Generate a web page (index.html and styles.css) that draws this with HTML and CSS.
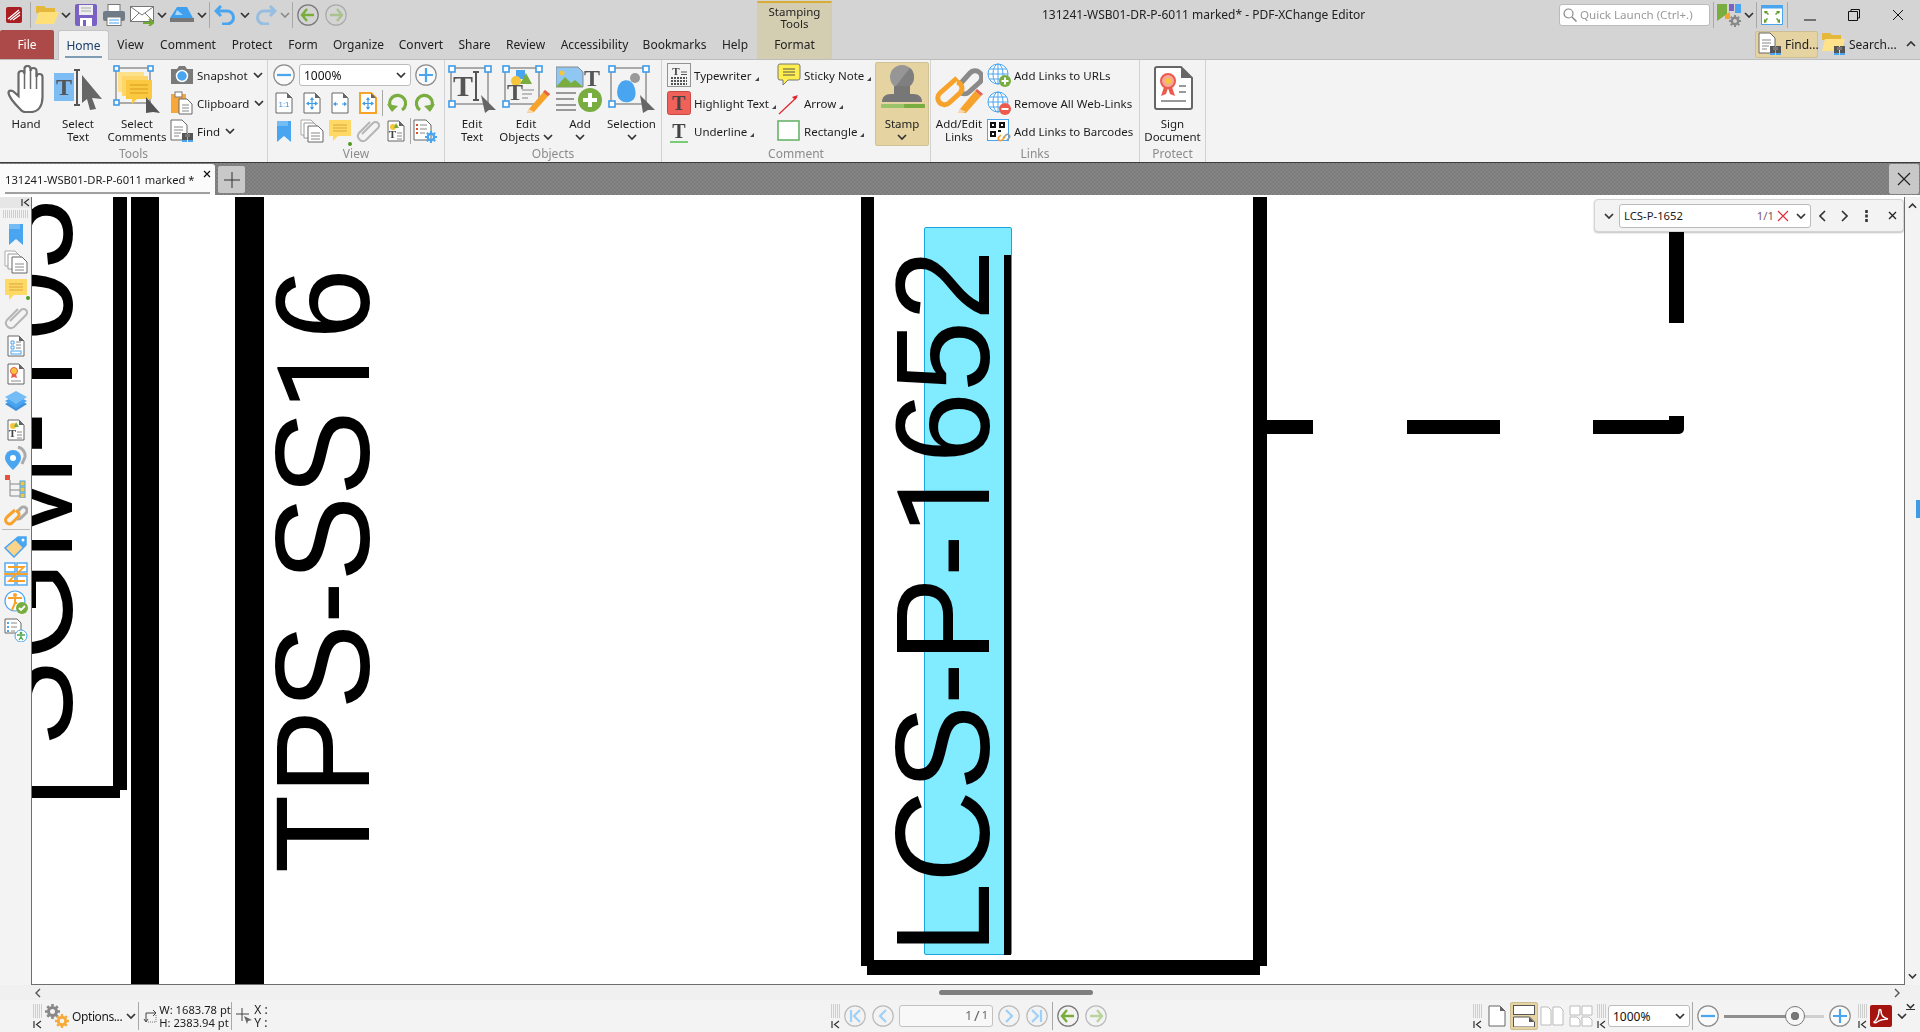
FILE: index.html
```html
<!DOCTYPE html>
<html>
<head>
  <meta charset="UTF-8">
  <title>131241-WSB01-DR-P-6011 marked* - PDF-XChange Editor</title>
  <link rel="stylesheet" href="styles.css">
</head>
<body>
<svg class="defs">
  <symbol id="dd" viewBox="0 0 10 6"><path d="M1 1l4 4 4-4" fill="none" stroke="#333" stroke-width="1.7"/></symbol>
  <symbol id="ddup" viewBox="0 0 10 6"><path d="M1 5l4-4 4 4" fill="none" stroke="#333" stroke-width="1.7"/></symbol>
  <symbol id="collapse" viewBox="0 0 9 9"><path d="M1 1v7M8 1L3.500 4.500 8 8" fill="none" stroke="#333" stroke-width="1.200"/></symbol>
  <symbol id="grip" viewBox="0 0 9 15"><path d="M0 1h9M0 3h9M0 5h9M0 7h9M0 9h9M0 11h9M0 13h9" stroke="#aaa" stroke-dasharray="1 1"/></symbol>
  <symbol id="logo" viewBox="0 0 16 16"><rect width="16" height="16" rx="2" fill="#a81e22"/><path d="M2 12L13 3M4 13L14 5M7 13l7-5" stroke="#fff" stroke-width="1.300"/></symbol>
  <symbol id="folder" viewBox="0 0 24 20"><path d="M1 1h8l2 2h9v5H1z" fill="#e5b83b"/><path d="M0 19L4 7h20l-5 12z" fill="#ffdf78"/></symbol>
  <symbol id="save" viewBox="0 0 22 22"><rect width="22" height="22" rx="2" fill="#7a62c4"/><rect x="4" y="1" width="14" height="10" fill="#eee"/><path d="M6 4h10M6 7h10" stroke="#aaa"/><rect x="5" y="14" width="12" height="8" fill="#fff"/><rect x="8" y="16" width="3" height="6" fill="#7a62c4"/></symbol>
  <symbol id="print" viewBox="0 0 22 22"><rect x="5" y="0.500" width="12" height="8" fill="#fff" stroke="#777"/><rect y="7" width="22" height="10" rx="2" fill="#6f7c88"/><rect x="4" y="13" width="14" height="8.500" fill="#fff" stroke="#777"/><path d="M6 16h10M6 19h10" stroke="#4aa5f0"/></symbol>
  <symbol id="mail" viewBox="0 0 26 22"><rect x="0.500" y="2.500" width="23" height="15" fill="#fff" stroke="#777"/><path d="M1 3l11 8 11-8M1 17l8-8M23 17l-8-8" fill="none" stroke="#777"/><path d="M13 19h10M19 15l4 4-4 3" fill="none" stroke="#6fa832" stroke-width="2"/></symbol>
  <symbol id="tray" viewBox="0 0 24 16"><path d="M7 0h10l6 11H0z" fill="#3fa0ef"/><path d="M7 3l-2 5h8z" fill="#a9d8fb"/><rect y="11" width="24" height="4" fill="#777"/></symbol>
  <symbol id="undo" viewBox="0 0 22 20"><path d="M7 1L2 6l5 5M2 6h11a6 6 0 0 1 0 13H8" fill="none" stroke="#4aa5f0" stroke-width="3"/></symbol>
  <symbol id="back" viewBox="0 0 22 22"><circle cx="11" cy="11" r="10.200" fill="none" stroke="#777" stroke-width="1.200"/><path d="M10 5l-5 6 5 6M5 11h12" fill="none" stroke="#78ad3c" stroke-width="2.400"/></symbol>
  <symbol id="c-minus" viewBox="0 0 22 22"><circle cx="11" cy="11" r="10.200" fill="#fafafa" stroke="#8c8c8c" stroke-width="1.200"/><path d="M4 11h14" stroke="#4aa5f0" stroke-width="2.200"/></symbol>
  <symbol id="c-plus" viewBox="0 0 22 22"><circle cx="11" cy="11" r="10.200" fill="#fafafa" stroke="#8c8c8c" stroke-width="1.200"/><path d="M4 11h14M11 4v14" stroke="#4aa5f0" stroke-width="2.200"/></symbol>
  <symbol id="c-first" viewBox="0 0 22 22"><circle cx="11" cy="11" r="10.200" fill="none" stroke="#bbb" stroke-width="1.200"/><path d="M7 5v12M16 5l-6 6 6 6" fill="none" stroke="#9fd0f8" stroke-width="2.200"/></symbol>
  <symbol id="c-prev" viewBox="0 0 22 22"><circle cx="11" cy="11" r="10.200" fill="none" stroke="#bbb" stroke-width="1.200"/><path d="M14 5l-6 6 6 6" fill="none" stroke="#9fd0f8" stroke-width="2.200"/></symbol>
  <symbol id="hand" viewBox="0 0 38 48"><path d="M13 44C9 40 2 32 1.500 28c0-3 3.500-3 5.500-1l4.500 4V9a3 3 0 0 1 6 0V4a3 3 0 0 1 6 0v2a3 3 0 0 1 6 0v6a3 3 0 0 1 6 0v20c0 8-3.500 15-11.500 15H18c-2 0-3.500-1-5-3z" fill="#fff" stroke="#6a6a6a" stroke-width="2.200"/><path d="M17.500 9v15M23.500 5v19M29.500 7v17" stroke="#6a6a6a" stroke-width="1.500"/></symbol>
  <symbol id="sel-comments" viewBox="0 0 48 48"><rect x="3" y="3" width="34" height="35" fill="none" stroke="#aaa" stroke-width="2"/><rect x="5" y="7" width="26" height="20" fill="#fde08a"/><rect x="9" y="11" width="26" height="20" fill="#fdd568"/><path d="M13 15h26v19H24l-5 5v-5h-6z" fill="#fbc93f"/><path d="M17 20h18M17 24h18M17 28h18" stroke="#d89a20"/><g fill="#fff" stroke="#3e9be8" stroke-width="1.600"><rect x="1" y="1" width="5" height="5"/><rect x="35" y="1" width="5" height="5"/><rect x="1" y="35" width="5" height="5"/></g><path d="M33 32l14 16-7-1-7 1z" fill="#555"/></symbol>
  <symbol id="snapshot" viewBox="0 0 24 24"><path d="M1 6h6l2-3h6l2 3h6v15H1z" fill="#7a7a7a"/><circle cx="12" cy="13" r="5.500" fill="#4aa5f0" stroke="#fff" stroke-width="1.500"/></symbol>
  <symbol id="clipboard" viewBox="0 0 24 24"><rect x="1" y="3" width="15" height="19" fill="#f7a73a"/><rect x="5" y="1" width="7" height="5" fill="#fff" stroke="#777"/><path d="M9 8h8l5 5v10H9z" fill="#fff" stroke="#666"/><path d="M12 14h7M12 17h7M12 20h7" stroke="#888"/></symbol>
  <symbol id="findico" viewBox="0 0 24 24"><path d="M1 1h11l5 5v15H1z" fill="#fff" stroke="#666"/><path d="M4 8h9M4 11h9M4 14h7M4 17h5" stroke="#888"/><rect x="12" y="14" width="5" height="9" fill="#555"/><rect x="18" y="14" width="5" height="9" fill="#555"/><rect x="15" y="15" width="5" height="3" fill="#777"/><rect x="12" y="21" width="5" height="2" fill="#4aa5f0"/><rect x="18" y="21" width="5" height="2" fill="#4aa5f0"/></symbol>
  <symbol id="page" viewBox="0 0 18 22"><path d="M1 1h11l5 5v15H1z" fill="#fff" stroke="#666"/><path d="M12 1v5h5z" fill="#666"/></symbol>
  <symbol id="p-fit" viewBox="0 0 18 22"><use href="#page"/><path d="M9 6v11M3.500 11.500h11M7.500 8L9 6l1.500 2M7.500 15L9 17l1.500-2M6 10l-2 1.500L6 13M12 10l2 1.500L12 13" fill="none" stroke="#3e9be8" stroke-width="1.200"/></symbol>
  <symbol id="p-width" viewBox="0 0 18 22"><use href="#page"/><path d="M3 12h4M11 12h4M5 10.500L3 12l2 1.500M13 10.500l2 1.500-2 1.500" fill="none" stroke="#3e9be8" stroke-width="1.200"/></symbol>
  <symbol id="p-visible" viewBox="0 0 18 22"><path d="M1 1h11l5 5v15H1z" fill="#fff" stroke="#f7a22a" stroke-width="2"/><path d="M12 1v5h5z" fill="#666"/><path d="M9 6v11M3.500 11.500h11M7.500 8L9 6l1.500 2M7.500 15L9 17l1.500-2M6 10l-2 1.500L6 13M12 10l2 1.500L12 13" fill="none" stroke="#3e9be8" stroke-width="1.200"/></symbol>
  <symbol id="rot-l" viewBox="0 0 22 22"><path d="M6 17a8 8 0 1 1 10 1" fill="none" stroke="#79ad3f" stroke-width="3.200"/><path d="M1 12l5 8 6-6z" fill="#79ad3f"/></symbol>
  <symbol id="rot-r" viewBox="0 0 22 22"><path d="M16 17A8 8 0 1 0 6 18" fill="none" stroke="#79ad3f" stroke-width="3.200"/><path d="M21 12l-5 8-6-6z" fill="#79ad3f"/></symbol>
  <symbol id="bookmark" viewBox="0 0 24 24"><path d="M5 2h14v21l-7-6-7 6z" fill="#4aa5f0"/><path d="M5 2h11v5H5z" fill="#74bcf6"/></symbol>
  <symbol id="pages" viewBox="0 0 24 24"><path d="M1 1h10l3 3v12H1z" fill="#fff" stroke="#aaa"/><path d="M4 4h10l3 3v12H4z" fill="#fff" stroke="#999"/><path d="M8 7h10l5 5v11H8z" fill="#fff" stroke="#666"/><path d="M11 14h9M11 17h9M11 20h9" stroke="#888"/></symbol>
  <symbol id="note" viewBox="0 0 24 24"><path d="M1 1h22v16H10l-5 5v-5H1z" fill="#ffd966"/><path d="M5 6h14M5 9h14M5 12h14" stroke="#d9a53a"/></symbol>
  <symbol id="clip" viewBox="0 0 24 24"><path d="M6 15L17 4a3.500 3.500 0 0 1 5 5L10 21a5 5 0 0 1-7-7L14 3" fill="none" stroke="#b5b5b5" stroke-width="2"/></symbol>
  <symbol id="gear" viewBox="0 0 12 12"><circle cx="6" cy="6" r="3.200" fill="none" stroke="currentColor" stroke-width="2.400"/><path d="M6 0v2M6 10v2M0 6h2M10 6h2M1.800 1.800l1.400 1.400M8.800 8.800l1.400 1.400M10.200 1.800L8.800 3.200M3.200 8.800l-1.400 1.400" stroke="currentColor" stroke-width="2"/></symbol>
  <symbol id="docgear" viewBox="0 0 24 24"><path d="M1 1h12l5 5v15H1z" fill="#fff" stroke="#666"/><path d="M3 6h2M3 10h2M3 14h2" stroke="#d8532b" stroke-width="2"/><path d="M7 6h7M7 10h7M7 14h5" stroke="#888"/><svg x="12" y="12" width="12" height="12" class="blue-gear"><use href="#gear"/></svg></symbol>
  <symbol id="sticky" viewBox="0 0 24 24"><path d="M3 1h18a2 2 0 0 1 2 2v12a2 2 0 0 1-2 2H11l-5 5v-5H3a2 2 0 0 1-2-2V3a2 2 0 0 1 2-2z" fill="#ffee4d" stroke="#777"/><path d="M6 6h12M6 9h12M6 12h12" stroke="#555"/></symbol>
  <symbol id="arrow" viewBox="0 0 24 24"><path d="M2 23L20 6" stroke="#e3252c" stroke-width="1.200"/><path d="M21 4l-6 2 3 3z" fill="#e3252c"/></symbol>
  <symbol id="rect" viewBox="0 0 24 24"><rect x="1" y="2" width="21" height="19" fill="#fff" stroke="#69b36a" stroke-width="1.600"/></symbol>
  <symbol id="selection" viewBox="0 0 48 48"><rect x="3" y="3" width="35" height="36" fill="none" stroke="#aaa" stroke-width="2"/><circle cx="27" cy="13" r="5" fill="#999"/><path d="M10 22c3-9 12-8 15-3s5 16-4 18-14-6-11-15z" fill="#4aa5f0"/><g fill="#fff" stroke="#3e9be8" stroke-width="1.600"><rect x="1" y="1" width="6" height="6"/><rect x="35" y="1" width="6" height="6"/><rect x="1" y="36" width="6" height="6"/></g><path d="M32 30l15 15-7 0-5 3z" fill="#666"/></symbol>
  <symbol id="stamp" viewBox="0 0 48 48"><circle cx="24" cy="13" r="12" fill="#969696"/><path d="M32 4a12 12 0 0 1 0 18L17 23z" fill="#7f7f7f"/><rect x="16" y="22" width="16" height="8" fill="#777"/><path d="M4 38c0-5 3-8 9-8h22c6 0 9 3 9 8z" fill="#777"/><rect x="3" y="40" width="44" height="4" rx="1" fill="#9ac46a"/><rect x="26" y="40" width="21" height="4" rx="1" fill="#79ad3f"/></symbol>
  <symbol id="chain-big" viewBox="0 0 48 48"><path d="M26 18l9-10a6.500 6.500 0 0 1 10 9L34 27a6.500 6.500 0 0 1-9 0" fill="none" stroke="#8a8a8a" stroke-width="5"/><path d="M22 13L5 28a6.500 6.500 0 0 0 9 10l11-10a6.500 6.500 0 0 0-3-11" fill="none" stroke="#f7a22a" stroke-width="5"/><path d="M25 44l15-18 6 5-15 17-8 1z" fill="#f7a22a"/><path d="M42 24l6 5-2 2-6-5z" fill="#e8604c"/><path d="M25 44l6 3-8 2z" fill="#f5d9b0"/></symbol>
  <symbol id="globe" viewBox="0 0 24 24"><circle cx="11" cy="11" r="10" fill="#fff" stroke="#4aa5f0"/><ellipse cx="11" cy="11" rx="5" ry="10" fill="none" stroke="#4aa5f0"/><path d="M11 1v20M1 11h20M2.500 6h17M2.500 16h17" stroke="#4aa5f0"/></symbol>
  <symbol id="globe-add" viewBox="0 0 24 24"><use href="#globe"/><circle cx="18" cy="18" r="6" fill="#79ad3f"/><path d="M18 14.500v7M14.500 18h7" stroke="#fff" stroke-width="2"/></symbol>
  <symbol id="globe-del" viewBox="0 0 24 24"><use href="#globe"/><circle cx="18" cy="18" r="6" fill="#ec5a4b"/><path d="M14.500 18h7" stroke="#fff" stroke-width="2"/></symbol>
  <symbol id="qr" viewBox="0 0 24 24"><rect x="0.500" y="0.500" width="21" height="21" fill="#fff" stroke="#4aa5f0"/><path d="M3 3h6v6H3zM5 5h2v2H5zM12 3h6v6h-6zM14 5h2v2h-2zM3 12h6v6H3zM5 14h2v2H5zM11 11h3v2h-3z" fill="#111" fill-rule="evenodd"/><path d="M16 19l3-3a2 2 0 0 1 3 3l-2 2" fill="none" stroke="#999" stroke-width="1.600"/><path d="M18 18l-3 3a2 2 0 0 1-3-3l2-2" fill="none" stroke="#f7a22a" stroke-width="1.600"/></symbol>
  <symbol id="sign" viewBox="0 0 48 48"><path d="M8 2h24l11 11v29a2 2 0 0 1-2 2H8a2 2 0 0 1-2-2V4a2 2 0 0 1 2-2z" fill="#fff" stroke="#666" stroke-width="2"/><path d="M32 2v11h11z" fill="#666"/><circle cx="19" cy="16" r="7" fill="#f4a79a" stroke="#ec5a4b" stroke-width="2"/><circle cx="19" cy="16" r="3" fill="#f7c53a"/><path d="M15 22l-3 9 5-2 2-6 2 6 5 2-3-9z" fill="#ec5a4b"/><path d="M30 21h7M30 27h7M12 36h25" stroke="#999" stroke-width="2"/></symbol>
  <symbol id="ql" viewBox="0 0 14 14"><circle cx="5.500" cy="5.500" r="4.500" fill="none" stroke="#888" stroke-width="1.200"/><path d="M9 9l4.500 4.500" stroke="#888" stroke-width="1.500"/></symbol>
  <symbol id="theme" viewBox="0 0 24 24"><path d="M0 1h10v10L0 18z" fill="#79ad3f"/><path d="M12 1h5v7h-5z" fill="#7a62c4"/><path d="M18 1h6v9h-6z" fill="#4aa5f0"/><path d="M8 12l5-3v7H8z" fill="#f7a22a"/><svg x="12" y="12" width="12" height="12" class="grey-gear"><use href="#gear"/></svg></symbol>
  <symbol id="fullscreen" viewBox="0 0 22 20"><rect x="0.500" y="0.500" width="21" height="19" fill="#fff" stroke="#4aa5f0"/><rect x="0.500" y="0.500" width="21" height="3" fill="#4aa5f0"/><path d="M3 6h4L6 7l2 2-1 1-2-2-1 1zM19 6h-4l1 1-2 2 1 1 2-2 1 1zM3 18v-4l1 1 2-2 1 1-2 2 1 1zM19 18v-4l-1 1-2-2-1 1 2 2-1 1z" fill="#5f9e28"/></symbol>
  <symbol id="find-folder" viewBox="0 0 24 24"><path d="M0 1h8l2 2h9v5H0z" fill="#e5b83b"/><path d="M0 19L3 7h20l-4 12z" fill="#ffe28a"/><rect x="12" y="14" width="5" height="9" fill="#555"/><rect x="18" y="14" width="5" height="9" fill="#555"/><rect x="15" y="15" width="5" height="3" fill="#777"/><rect x="12" y="21" width="5" height="2" fill="#4aa5f0"/><rect x="18" y="21" width="5" height="2" fill="#4aa5f0"/></symbol>
  <symbol id="layers" viewBox="0 0 24 24"><path d="M12 8l11 6-11 7-11-7z" fill="#3e8fdc"/><path d="M12 5l11 6-11 7-11-7z" fill="#4aa5f0"/><path d="M12 1l11 6-11 7L1 7z" fill="#74bcf6"/></symbol>
  <symbol id="formdoc" viewBox="0 0 18 22"><use href="#page"/><path d="M4 6h3v3H4zM4 11h3v3H4z" fill="none" stroke="#4aa5f0"/><path d="M9 7h5M9 10h5M9 13h5" stroke="#888"/><rect x="4" y="16" width="10" height="3" fill="none" stroke="#4aa5f0"/></symbol>
  <symbol id="certdoc" viewBox="0 0 18 22"><use href="#page"/><circle cx="7" cy="8" r="3.500" fill="#f7c53a" stroke="#ec5a4b"/><path d="M5 11l-1 4 3-1 3 1-1-4z" fill="#ec5a4b"/><path d="M4 18h10" stroke="#888"/></symbol>
  <symbol id="pin" viewBox="0 0 24 24"><path d="M14 1a9 9 0 0 1 7 10l-3 7" fill="none" stroke="#aaa" stroke-width="3"/><path d="M9 4a8 8 0 0 1 8 8c0 4-5 9-8 12-3-3-8-8-8-12a8 8 0 0 1 8-8z" fill="#4aa5f0"/><circle cx="9" cy="12" r="3" fill="#fff"/></symbol>
  <symbol id="tree" viewBox="0 0 24 24"><path d="M6 6v16M6 10h10M6 16h10M6 22h10" stroke="#888" fill="none"/><rect x="1" y="1" width="5" height="5" fill="#e8503c"/><rect x="16" y="7" width="5" height="5" fill="#f7c53a" stroke="#4aa5f0"/><rect x="16" y="13" width="5" height="5" fill="#f7c53a" stroke="#4aa5f0"/><rect x="16" y="19" width="5" height="5" fill="#f7c53a" stroke="#4aa5f0"/></symbol>
  <symbol id="chain" viewBox="0 0 24 24"><path d="M13 10l4-4a3.500 3.500 0 0 1 5 5l-5 5a3.500 3.500 0 0 1-5 0" fill="none" stroke="#aaa" stroke-width="3"/><path d="M11 8l-8 7a3.500 3.500 0 0 0 5 6l6-6a3.500 3.500 0 0 0-2-6" fill="none" stroke="#f7a22a" stroke-width="3"/></symbol>
  <symbol id="tag" viewBox="0 0 24 24"><path d="M14 3h8v8L10 23 1 14z" fill="#fbd48c" stroke="#4aa5f0" stroke-width="1.500"/><path d="M14 3h8v8l-3 3-8-8z" fill="#4aa5f0"/><circle cx="19" cy="6" r="1.500" fill="#fff"/></symbol>
  <symbol id="compare" viewBox="0 0 24 24"><rect x="1" y="1" width="10" height="9" fill="#fff" stroke="#4aa5f0" stroke-width="1.400"/><rect x="13" y="1" width="10" height="9" fill="#fff" stroke="#4aa5f0" stroke-width="1.400"/><rect x="1" y="14" width="10" height="9" fill="#fff" stroke="#4aa5f0" stroke-width="1.400"/><rect x="13" y="14" width="10" height="9" fill="#fff" stroke="#4aa5f0" stroke-width="1.400"/><path d="M4 5h16L5 19h16M0 12h24" fill="none" stroke="#f7a22a" stroke-width="1.800"/></symbol>
  <symbol id="access" viewBox="0 0 24 24"><circle cx="11" cy="11" r="10" fill="#fff" stroke="#4aa5f0" stroke-width="1.200"/><circle cx="11" cy="5" r="2" fill="#f7a22a"/><path d="M4 8h14M11 8v5l-3 7M11 13h2" fill="none" stroke="#f7a22a" stroke-width="2"/><circle cx="18" cy="18" r="6" fill="#79ad3f"/><path d="M15 18l2 2 4-4" fill="none" stroke="#fff" stroke-width="1.800"/></symbol>
  <symbol id="accdoc" viewBox="0 0 24 24"><path d="M1 1h12l4 4v10H1z" fill="#fff" stroke="#666"/><path d="M3 5h2M3 9h2M3 13h2" stroke="#4aa5f0" stroke-width="2"/><path d="M7 5h6M7 9h6M7 13h4" stroke="#888"/><circle cx="17" cy="18" r="6" fill="#fff" stroke="#4aa5f0"/><circle cx="17" cy="15" r="1.300" fill="#4fa84a"/><path d="M13 17h8M17 17v2l-2 3M17 19l2 3" fill="none" stroke="#4fa84a" stroke-width="1.300"/></symbol>
  <symbol id="opts" viewBox="0 0 24 24"><svg x="0" y="0" width="15" height="15" class="grey-gear"><use href="#gear"/></svg><svg x="10" y="10" width="14" height="14" class="orange-gear"><use href="#gear"/></svg></symbol>
  <symbol id="sizeico" viewBox="0 0 15 15"><path d="M3 4h10M10 1l3 3-3 3M3 4v9M1 10l2 3 2-3" fill="none" stroke="#444"/><path d="M5 13h8V6" fill="none" stroke="#777" stroke-dasharray="1 1"/></symbol>
  <symbol id="cross" viewBox="0 0 16 16"><path d="M6 0v13M0 6h13" stroke="#444"/><path d="M8 8l8 4-4 1-1 3z" fill="#666"/></symbol>
  <symbol id="twopages" viewBox="0 0 24 20"><path d="M1 1h7l3 3v15H1zM13 1h7l3 3v15H13z" fill="#fff" stroke="#bbb"/></symbol>
  <symbol id="fourpages" viewBox="0 0 24 22"><path d="M1 1h10v9H1zM13 1h10v9H13zM1 12h7l3 3v6H1zM13 12h7l3 3v6H13z" fill="#fff" stroke="#bbb"/></symbol>
  <symbol id="twoup" viewBox="0 0 22 22"><rect x="0.500" y="0.500" width="21" height="9" fill="#fff" stroke="#555"/><path d="M0.500 12h16l5 5v5h-21z" fill="#fff" stroke="#555"/><path d="M16 12v5h5z" fill="#555"/></symbol>
  <symbol id="pdf" viewBox="0 0 22 22"><rect width="22" height="22" rx="2" fill="#a5140f"/><path d="M4 17c3-2 5-7 5-11 0-2 2-2 2 0 0 4 3 7 7 8-4 0-8 1-11 3-1 1-3 1-3 0z" fill="none" stroke="#fff" stroke-width="1.500"/></symbol>
</svg>

<header class="titlebar">
  <div class="qat">
    <svg class="q-logo"><use href="#logo"/></svg>
    <i class="vsep q-sep1"></i>
    <svg class="i-folder"><use href="#folder"/></svg><svg class="dd"><use href="#dd"/></svg>
    <svg class="i22 q-save"><use href="#save"/></svg>
    <svg class="i22 q-print"><use href="#print"/></svg>
    <svg class="i-mail"><use href="#mail"/></svg><svg class="dd"><use href="#dd"/></svg>
    <svg class="i-tray"><use href="#tray"/></svg><svg class="dd"><use href="#dd"/></svg>
    <i class="vsep"></i>
    <svg class="i-undo"><use href="#undo"/></svg><svg class="dd"><use href="#dd"/></svg>
    <svg class="i-undo flip faded redo"><use href="#undo"/></svg><svg class="dd faded"><use href="#dd"/></svg>
    <i class="vsep"></i>
    <svg class="i22"><use href="#back"/></svg>
    <svg class="i22 flip faded"><use href="#back"/></svg>
  </div>
  <div class="doc-title">131241-WSB01-DR-P-6011 marked* - PDF-XChange Editor</div>
  <div class="title-right">
    <div class="quick"><svg class="i14"><use href="#ql"/></svg><span>Quick Launch (Ctrl+.)</span></div>
    <i class="vsep"></i>
    <svg class="i24"><use href="#theme"/></svg><svg class="dd"><use href="#dd"/></svg>
    <i class="vsep"></i>
    <svg class="i-full"><use href="#fullscreen"/></svg>
    <i class="vsep"></i>
    <div class="winbtn"><svg width="14" height="14"><path d="M1 12h12" stroke="#111"/></svg></div>
    <div class="winbtn"><svg width="14" height="14"><path d="M1.500 3.500h9v9h-9zM4 3V1.500h8.500V10H11" fill="none" stroke="#111"/></svg></div>
    <div class="winbtn"><svg width="14" height="14"><path d="M2 2l10 10M12 2L2 12" stroke="#111"/></svg></div>
  </div>
</header>

<nav class="tabs">
  <div class="tab tab-file">File</div>
  <div class="tab tab-home">Home</div>
  <div class="tab">View</div>
  <div class="tab">Comment</div>
  <div class="tab">Protect</div>
  <div class="tab">Form</div>
  <div class="tab">Organize</div>
  <div class="tab">Convert</div>
  <div class="tab">Share</div>
  <div class="tab">Review</div>
  <div class="tab">Accessibility</div>
  <div class="tab">Bookmarks</div>
  <div class="tab">Help</div>
  <div class="tab tab-format">Format</div>
  <div class="tabs-right">
    <div class="find-btn"><svg class="i24"><use href="#findico"/></svg><span>Find...</span></div>
    <div class="search-btn"><svg class="i24"><use href="#find-folder"/></svg><span>Search...</span></div>
    <svg class="dd"><use href="#ddup"/></svg>
  </div>
  <div class="ctx-label">Stamping<br>Tools</div>
</nav>

<section class="ribbon">
  <div class="group g-tools">
    <div class="group-body">
      <div class="big b-hand"><svg class="i48"><use href="#hand"/></svg><span>Hand</span></div>
      <div class="big b-seltext">
        <svg class="i48" viewBox="0 0 48 48"><rect y="8" width="20" height="28" fill="#7dbdf3"/><text x="10" y="30" class="ic-t">T</text><path d="M20 5h6M23 5v35M20 40h6" stroke="#555" stroke-width="2" fill="none"/><path d="M28 10l20 24-10-1 4 11-6 1-3-11-5 4z" fill="#666"/></svg>
        <span>Select<br>Text</span>
      </div>
      <div class="big b-selcom"><svg class="i48"><use href="#sel-comments"/></svg><span>Select<br>Comments</span></div>
      <div class="col">
        <div class="row"><svg class="i24"><use href="#snapshot"/></svg><span>Snapshot</span><svg class="dd"><use href="#dd"/></svg></div>
        <div class="row"><svg class="i24"><use href="#clipboard"/></svg><span>Clipboard</span><svg class="dd"><use href="#dd"/></svg></div>
        <div class="row"><svg class="i24"><use href="#findico"/></svg><span>Find</span><svg class="dd"><use href="#dd"/></svg></div>
      </div>
    </div>
    <div class="group-label">Tools</div>
  </div>
  <div class="group g-view">
    <div class="group-body view-grid">
      <div class="cells">
        <div class="cell"><svg class="i22"><use href="#c-minus"/></svg></div>
        <div class="combo zoom-combo"><span>1000%</span><svg class="dd"><use href="#dd"/></svg></div>
        <div class="cell"><svg class="i22"><use href="#c-plus"/></svg></div>
      </div>
      <div class="cells">
        <div class="cell"><svg class="i-page" viewBox="0 0 18 22"><use href="#page" width="18" height="22"/><text x="9" y="15" class="ic-s">1:1</text></svg></div>
        <div class="cell"><svg class="i-page"><use href="#p-fit"/></svg></div>
        <div class="cell"><svg class="i-page"><use href="#p-width"/></svg></div>
        <div class="cell"><svg class="i-page"><use href="#p-visible"/></svg></div>
        <i class="vsep"></i>
        <div class="cell"><svg class="i22"><use href="#rot-l"/></svg></div>
        <div class="cell"><svg class="i22"><use href="#rot-r"/></svg></div>
      </div>
      <div class="cells">
        <div class="cell"><svg class="i24"><use href="#bookmark"/></svg></div>
        <div class="cell"><svg class="i24"><use href="#pages"/></svg></div>
        <div class="cell"><svg class="i24"><use href="#note"/></svg><b class="green-dot"></b></div>
        <div class="cell"><svg class="i24"><use href="#clip"/></svg></div>
        <div class="cell"><svg class="i-page" viewBox="0 0 18 22"><use href="#page" width="18" height="22"/><circle cx="6" cy="7" r="3" fill="#f7c53a"/><path d="M9 3l3 5H7z" fill="#79ad3f"/><text x="5.500" y="18" class="ic-m">T</text><path d="M10 13h5M10 16h5M10 19h5" stroke="#888"/></svg></div>
        <i class="vsep"></i>
        <div class="cell"><svg class="i24"><use href="#docgear"/></svg></div>
      </div>
    </div>
    <div class="group-label">View</div>
  </div>
  <div class="group g-objects">
    <div class="group-body">
      <div class="big b-obj">
        <svg class="i48" viewBox="0 0 48 48"><rect x="3" y="3" width="37" height="36" fill="none" stroke="#aaa" stroke-width="2"/><text x="15" y="31" class="ic-b">T</text><path d="M25 7h6M28 7v28M25 35h6" stroke="#555" stroke-width="2" fill="none"/><g fill="#fff" stroke="#3e9be8" stroke-width="1.600"><rect x="1" y="1" width="6" height="6"/><rect x="37" y="1" width="6" height="6"/><rect x="1" y="36" width="6" height="6"/></g><path d="M33 30l15 15-7 0-4 3z" fill="#666"/></svg>
        <span>Edit<br>Text</span>
      </div>
      <div class="big b-obj">
        <svg class="i48" viewBox="0 0 48 48"><rect x="3" y="3" width="34" height="36" fill="none" stroke="#aaa" stroke-width="2"/><rect x="14" y="5" width="9" height="9" fill="#4aa5f0"/><circle cx="14" cy="16" r="5" fill="#f7c53a"/><path d="M24 8l6 11H18z" fill="#79ad3f"/><text x="13" y="35" class="ic-t">T</text><path d="M20 25h12M20 29h10M20 33h6" stroke="#aaa" stroke-width="1.400"/><g fill="#fff" stroke="#3e9be8" stroke-width="1.600"><rect x="1" y="1" width="6" height="6"/><rect x="34" y="1" width="6" height="6"/><rect x="1" y="36" width="6" height="6"/></g><path d="M27 44l16-19 5 4-16 18-7 1z" fill="#f7a22a"/><path d="M27 44l5 3-7 1z" fill="#f5d9b0"/><path d="M43 25l5 4-2 2-5-4z" fill="#e8604c"/></svg>
        <span>Edit<br>Objects <svg class="dd"><use href="#dd"/></svg></span>
      </div>
      <div class="big b-obj">
        <svg class="i48" viewBox="0 0 48 48"><path d="M0 2h22l5 5v15H0z" fill="#8fc6f2" stroke="#888"/><path d="M0 22l9-10 6 6 4-3 8 7z" fill="#79ad3f"/><circle cx="6" cy="8" r="2.500" fill="#f7c53a"/><text x="36" y="21" class="ic-t">T</text><path d="M0 28h20M0 34h18M0 40h20M0 45h20" stroke="#999" stroke-width="2"/><circle cx="34" cy="35" r="12" fill="#79ad3f"/><path d="M34 28v14M27 35h14" stroke="#fff" stroke-width="4"/></svg>
        <span>Add<br><svg class="dd"><use href="#dd"/></svg></span>
      </div>
      <div class="big b-sel"><svg class="i48"><use href="#selection"/></svg><span>Selection<br><svg class="dd"><use href="#dd"/></svg></span></div>
    </div>
    <div class="group-label">Objects</div>
  </div>
  <div class="group g-comment">
    <div class="group-body">
      <div class="col c1">
        <div class="row"><svg class="i24" viewBox="0 0 24 24"><rect x="0.500" y="0.500" width="23" height="23" fill="none" stroke="#333" stroke-dasharray="1 1"/><text x="9" y="12" class="ic-m">T</text><path d="M14 9h6M14 11.500h6" stroke="#555"/><path d="M4 15h16M4 18h16M4 21h16" stroke="#555" stroke-width="2" stroke-dasharray="2 1"/></svg><span>Typewriter</span><i class="corner"></i></div>
        <div class="row"><svg class="i24" viewBox="0 0 24 24"><rect x="0.500" y="0.500" width="23" height="23" rx="2" fill="#f0615a" stroke="#c84a44"/><text x="12" y="19" class="ic-l">T</text></svg><span>Highlight Text</span><i class="corner"></i></div>
        <div class="row"><svg class="i24" viewBox="0 0 24 24"><text x="12" y="19" class="ic-l">T</text><path d="M3 23h18" stroke="#4fbf4a" stroke-width="1.500"/></svg><span>Underline</span><i class="corner"></i></div>
      </div>
      <div class="col c2">
        <div class="row"><svg class="i24"><use href="#sticky"/></svg><span>Sticky Note</span><i class="corner"></i></div>
        <div class="row"><svg class="i24"><use href="#arrow"/></svg><span>Arrow</span><i class="corner"></i></div>
        <div class="row"><svg class="i24"><use href="#rect"/></svg><span>Rectangle</span><i class="corner"></i></div>
      </div>
      <div class="big b-stamp"><svg class="i48"><use href="#stamp"/></svg><span>Stamp<br><svg class="dd"><use href="#dd"/></svg></span></div>
    </div>
    <div class="group-label">Comment</div>
  </div>
  <div class="group g-links">
    <div class="group-body">
      <div class="big b-link"><svg class="i48"><use href="#chain-big"/></svg><span>Add/Edit<br>Links</span></div>
      <div class="col">
        <div class="row"><svg class="i24"><use href="#globe-add"/></svg><span>Add Links to URLs</span></div>
        <div class="row"><svg class="i24"><use href="#globe-del"/></svg><span>Remove All Web-Links</span></div>
        <div class="row"><svg class="i24"><use href="#qr"/></svg><span>Add Links to Barcodes</span></div>
      </div>
    </div>
    <div class="group-label">Links</div>
  </div>
  <div class="group g-protect">
    <div class="group-body">
      <div class="big b-sign"><svg class="i48"><use href="#sign"/></svg><span>Sign<br>Document</span></div>
    </div>
    <div class="group-label">Protect</div>
  </div>
</section>

<div class="docbar">
  <div class="doctab"><span>131241-WSB01-DR-P-6011 marked *</span><svg class="x8" viewBox="0 0 8 8"><path d="M1 1l6 6M7 1L1 7" stroke="#111" stroke-width="1.200"/></svg></div>
  <div class="newtab"><svg width="16" height="16"><path d="M8 0v16M0 8h16" stroke="#333"/></svg></div>
  <div class="closeall"><svg width="14" height="14"><path d="M1 1l12 12M13 1L1 13" stroke="#222" stroke-width="1.200"/></svg></div>
</div>

<main class="main">
  <aside class="sidebar">
    <div class="side-top"><svg class="i9"><use href="#collapse"/></svg></div>
    <svg class="side-grip" viewBox="0 0 26 9"><path d="M0 1h26M0 3h26M0 5h26M0 7h26" stroke="#aaa" stroke-dasharray="1 1"/></svg>
    <div class="side-icons">
      <svg class="i24"><use href="#bookmark"/></svg>
      <svg class="i24"><use href="#pages"/></svg>
      <div class="side-note"><svg class="i24"><use href="#note"/></svg><b class="green-dot"></b></div>
      <svg class="i24"><use href="#clip"/></svg>
      <svg class="i-page"><use href="#formdoc"/></svg>
      <svg class="i-page"><use href="#certdoc"/></svg>
      <svg class="i24"><use href="#layers"/></svg>
      <svg class="i-page" viewBox="0 0 18 22"><use href="#page" width="18" height="22"/><circle cx="6" cy="7" r="3" fill="#f7c53a"/><path d="M9 3l3 5H7z" fill="#79ad3f"/><text x="5.500" y="18" class="ic-m">T</text><path d="M10 13h5M10 16h5M10 19h5" stroke="#888"/></svg>
      <svg class="i24"><use href="#pin"/></svg>
      <svg class="i24"><use href="#tree"/></svg>
      <svg class="i24"><use href="#chain"/></svg>
      <i class="side-sep"></i>
      <svg class="i24"><use href="#tag"/></svg>
      <svg class="i24"><use href="#compare"/></svg>
      <svg class="i24"><use href="#access"/></svg>
      <svg class="i24"><use href="#accdoc"/></svg>
    </div>
  </aside>
  <div class="canvas">
    <div class="ink box-right"></div>
    <div class="ink box-bottom"></div>
    <div class="ink bar-a"></div>
    <div class="ink bar-b"></div>
    <div class="ink frame-left"></div>
    <div class="ink frame-right"></div>
    <div class="ink frame-bottom"></div>
    <div class="ink dash-a"></div>
    <div class="ink dash-b"></div>
    <div class="ink dash-c"></div>
    <div class="ink stem-top"></div>
    <div class="ink stem-stub"></div>
    <div class="ink mark-line"></div>
    <div class="pdf-text txt-sgm">SGM-<span class="one">1</span>03</div>
    <div class="pdf-text txt-tps">TPS-SS<span class="one">1</span>6</div>
    <div class="pdf-text txt-lcs">LCS-P-<span class="one">1</span>652</div>
    <div class="hit"></div>
    <div class="findbar">
      <svg class="dd"><use href="#dd"/></svg>
      <div class="find-input"><span class="find-q">LCS-P-1652</span><span class="find-n">1/1</span><svg class="x12" viewBox="0 0 12 12"><path d="M1 1l10 10M11 1L1 11" stroke="#e0323a" stroke-width="1.200"/></svg><svg class="dd"><use href="#dd"/></svg></div>
      <svg class="nav7" viewBox="0 0 7 12"><path d="M6 1L1 6l5 5" fill="none" stroke="#333" stroke-width="1.600"/></svg>
      <svg class="nav7" viewBox="0 0 7 12"><path d="M1 1l5 5-5 5" fill="none" stroke="#333" stroke-width="1.600"/></svg>
      <svg class="nav7" viewBox="0 0 7 12"><path d="M3.500 0v3M3.500 4.500v3M3.500 9v3" stroke="#333" stroke-width="2.600"/></svg>
      <svg class="x9" viewBox="0 0 9 9"><path d="M1 1l7 7M8 1L1 8" stroke="#222" stroke-width="1.300"/></svg>
    </div>
  </div>
  <div class="vscroll">
    <svg class="dd"><use href="#ddup"/></svg>
    <i class="vthumb"></i>
    <svg class="dd"><use href="#dd"/></svg>
  </div>
</main>

<div class="hscroll">
  <svg class="sc-arrow" viewBox="0 0 6 10"><path d="M5 1L1 5l4 4" fill="none" stroke="#555" stroke-width="1.400"/></svg>
  <i class="hthumb"></i>
  <svg class="sc-arrow" viewBox="0 0 6 10"><path d="M1 1l4 4-4 4" fill="none" stroke="#555" stroke-width="1.400"/></svg>
</div>

<footer class="status">
  <div class="st-left">
    <div class="grip-box"><svg class="grip"><use href="#grip"/></svg><svg class="i9"><use href="#collapse"/></svg></div>
    <svg class="i24 st-opts"><use href="#opts"/></svg>
    <span class="st-text">Options...</span>
    <svg class="dd"><use href="#dd"/></svg>
    <i class="vsep"></i>
    <svg class="i15"><use href="#sizeico"/></svg>
    <div class="st-size"><span>W: 1683.78 pt</span><span>H: 2383.94 pt</span></div>
    <i class="vsep"></i>
    <svg class="i16"><use href="#cross"/></svg>
    <div class="st-xy"><span>X :</span><span>Y :</span></div>
  </div>
  <div class="st-center">
    <div class="grip-box"><svg class="grip"><use href="#grip"/></svg><svg class="i9"><use href="#collapse"/></svg></div>
    <svg class="i22 nav-first"><use href="#c-first"/></svg>
    <svg class="i22"><use href="#c-prev"/></svg>
    <div class="page-box"><span>1</span><em>/</em><sup>1</sup></div>
    <svg class="i22 flip"><use href="#c-prev"/></svg>
    <svg class="i22 flip"><use href="#c-first"/></svg>
    <i class="vsep"></i>
    <svg class="i22"><use href="#back"/></svg>
    <svg class="i22 flip faded"><use href="#back"/></svg>
  </div>
  <div class="st-right">
    <div class="grip-box"><svg class="grip"><use href="#grip"/></svg><svg class="i9"><use href="#collapse"/></svg></div>
    <svg class="st-single"><use href="#page"/></svg>
    <div class="st-on"><svg class="i22"><use href="#twoup"/></svg></div>
    <svg class="st-two"><use href="#twopages"/></svg>
    <svg class="st-four"><use href="#fourpages"/></svg>
    <div class="grip-box"><svg class="grip"><use href="#grip"/></svg><svg class="i9"><use href="#collapse"/></svg></div>
    <div class="combo st-combo"><span>1000%</span><svg class="dd"><use href="#dd"/></svg></div>
    <i class="vsep"></i>
    <svg class="i22"><use href="#c-minus"/></svg>
    <div class="slider"><i class="knob"></i></div>
    <svg class="i22"><use href="#c-plus"/></svg>
    <div class="grip-box grip-pdf"><svg class="grip"><use href="#grip"/></svg><svg class="i9"><use href="#collapse"/></svg></div>
    <svg class="i22"><use href="#pdf"/></svg>
    <svg class="dd"><use href="#dd"/></svg>
    <div class="st-end"><svg class="dd"><use href="#dd"/></svg></div>
  </div>
</footer>
</body>
</html>
```

FILE: styles.css
```css
* {
  margin: 0;
  padding: 0;
  box-sizing: border-box;
}
html, body {
  width: 1920px;
  height: 1032px;
  overflow: hidden;
}
body {
  display: flex;
  flex-direction: column;
  font: 11.5px/13px "Noto Sans", "Liberation Sans", sans-serif;
  color: #1c1c1c;
  background: #f3f3f3;
}
svg {
  display: block;
  flex: none;
}
.defs {
  position: absolute;
  width: 0;
  height: 0;
}
.ic-t { font: bold 24px "Liberation Serif", serif; fill: #555; text-anchor: middle; }
.ic-b { font: bold 30px "Liberation Serif", serif; fill: #555; text-anchor: middle; }
.ic-l { font: bold 20px "Liberation Serif", serif; fill: #444; text-anchor: middle; }
.ic-m { font: bold 11px "Liberation Serif", serif; fill: #444; text-anchor: middle; }
.ic-s { font: 8px "Liberation Sans", sans-serif; fill: #3e8fdc; text-anchor: middle; }
.blue-gear { color: #4aa5f0; }
.grey-gear { color: #888; }
.orange-gear { color: #f7a93a; }

.i9 { width: 9px; height: 9px; }
.i14 { width: 14px; height: 14px; }
.i15 { width: 15px; height: 15px; }
.i16 { width: 16px; height: 16px; }
.i22 { width: 22px; height: 22px; }
.i24 { width: 24px; height: 24px; }
.i48 { width: 48px; height: 48px; }
.i-page { width: 18px; height: 22px; }
.dd { width: 10px; height: 6px; }
.flip { transform: scaleX(-1); }
.faded { opacity: .45; }
.vsep {
  display: block;
  flex: none;
  width: 1px;
  height: 26px;
  background: #a8a8a8;
}

/* title bar */
.titlebar {
  position: relative;
  display: flex;
  flex: none;
  height: 29px;
  background: #d4d4d4;
}
.qat {
  display: flex;
  align-items: center;
  padding-left: 6px;
}
.q-logo { width: 16px; height: 16px; }
.qat .vsep { margin: 0 4px 0 2px; }
.qat .q-sep1 { margin: 0 4px 0 8px; }
.i-folder { width: 24px; height: 20px; margin-right: 2px; }
.q-save { margin-left: 4px; }
.q-print { margin-left: 6px; }
.i-mail { width: 26px; height: 22px; margin-left: 5px; margin-right: 1px; }
.i-tray { width: 24px; height: 16px; margin-left: 3px; margin-right: 3px; }
.i-undo { width: 22px; height: 20px; margin-right: 4px; }
.i-undo.redo { margin-left: 5px; margin-right: 3px; }
.qat .i22 + .i22 { margin-left: 6px; }
.doc-title {
  position: absolute;
  left: 1042px;
  top: 8px;
  font-size: 12px;
  color: #222;
}
.title-right {
  display: flex;
  align-items: center;
  margin-left: auto;
}
.quick {
  display: flex;
  align-items: center;
  gap: 3px;
  width: 151px;
  height: 22px;
  margin-right: 3px;
  padding-left: 3px;
  font-size: 11.6px;
  color: #9a9a9a;
  background: #fff;
  border: 1px solid #bbb;
  border-radius: 3px;
}
.title-right .i24 { margin-left: 3px; }
.title-right .dd { margin: 0 2px 0 3px; }
.i-full { width: 22px; height: 20px; margin: 0 4px; }
.winbtn {
  display: flex;
  align-items: center;
  justify-content: center;
  width: 44px;
  height: 29px;
}

/* tab row */
.tabs {
  position: relative;
  display: grid;
  flex: none;
  grid-template-columns: 58px 51px 43px 72px 56px 46px 65px 60px 47px 55px 83px 77px 44px 75px 1fr;
  height: 31px;
  font-size: 12px;
  background: #d4d4d4;
  border-bottom: 1px solid #bdbdbd;
}
.tab {
  display: flex;
  align-items: center;
  justify-content: center;
  color: #222;
}
.tab-file {
  width: 54px;
  margin-top: 1px;
  color: #fff;
  background: #ac4a4a;
  border-radius: 2px 2px 0 0;
}
.tab-home {
  position: relative;
  color: #1b3f6a;
  background: #f3f3f3;
  border: 1px solid #c4c4c4;
  border-bottom: 0;
  border-radius: 3px 3px 0 0;
  margin-top: 1px;
  margin-bottom: -1px;
}
.tab-home::after {
  content: "";
  position: absolute;
  left: 6px;
  right: 6px;
  bottom: 2px;
  height: 2px;
  background: #7f9db5;
}
.tab-format {
  background: #d3ceb1;
  border: 1px solid #d8cd94;
  border-top: 0;
  border-bottom: 0;
}
.ctx-label {
  position: absolute;
  left: 757px;
  top: -28px;
  width: 75px;
  height: 28px;
  padding-top: 3px;
  font-size: 11.5px;
  line-height: 12px;
  text-align: center;
  color: #222;
  background: #d3ceb1;
  border: 1px solid #d8cd94;
  border-top: 2px solid #d6ac35;
  border-bottom: 0;
}
.tabs-right {
  display: flex;
  align-items: center;
  padding-left: 923px;
}
.find-btn, .search-btn {
  display: flex;
  align-items: center;
  flex: none;
  gap: 3px;
  height: 27px;
}
.find-btn {
  width: 63px;
  padding-left: 2px;
  margin-right: 4px;
  background: #e5d3a1;
  border: 1px solid #cdbf95;
  border-radius: 2px;
}
.search-btn { width: 84px; }

/* ribbon */
.ribbon {
  display: flex;
  flex: none;
  height: 102px;
  background: #f3f3f3;
}
.group {
  display: flex;
  flex-direction: column;
  flex: none;
  border-right: 1px solid #d2d2d2;
}
.g-tools { width: 268px; }
.g-view { width: 177px; }
.g-objects { width: 217px; }
.g-comment { width: 269px; }
.g-links { width: 209px; }
.g-protect { width: 66px; }
.group-body {
  display: flex;
  flex: none;
  height: 86px;
  padding-top: 2px;
}
.group-label {
  flex: 1;
  padding-top: 1px;
  font-size: 12px;
  text-align: center;
  color: #8c8c8c;
}
.big {
  display: flex;
  flex-direction: column;
  align-items: center;
  flex: none;
  padding-top: 3px;
  text-align: center;
}
.big span {
  margin-top: 4px;
}
.big span .dd {
  display: inline-block;
  vertical-align: 1px;
}
.b-hand { width: 52px; }
.b-seltext { width: 52px; }
.b-selcom { width: 66px; }
.b-obj { width: 54px; }
.b-sel { width: 49px; }
.b-link { width: 56px; }
.b-sign { width: 65px; }
.col {
  display: flex;
  flex-direction: column;
  flex: none;
  margin-top: -1px;
}
.row {
  display: flex;
  align-items: center;
  gap: 3px;
  height: 28px;
  white-space: nowrap;
}
.row .dd { margin-left: 2px; }
.corner {
  align-self: flex-end;
  width: 0;
  height: 0;
  margin: 0 0 8px 0;
  border-left: 4px solid transparent;
  border-bottom: 4px solid #444;
}
.c1 { width: 115px; padding-left: 5px; }
.c2 { width: 96px; }
.b-stamp {
  width: 54px;
  height: 84px;
  padding-top: 1px;
  background: #e5d3a1;
  border: 1px solid #d0c297;
  border-radius: 2px;
  margin-left: 2px;
}
.b-stamp span { margin-top: 5px; }
.view-grid {
  flex-direction: column;
  padding-left: 2px;
  padding-top: 1px;
}
.cells {
  display: flex;
  align-items: center;
  height: 28px;
}
.cell {
  position: relative;
  display: flex;
  align-items: center;
  justify-content: center;
  flex: none;
  width: 28px;
}
.green-dot {
  position: absolute;
  right: 2px;
  bottom: -3px;
  width: 4px;
  height: 4px;
  border-radius: 50%;
  background: #4f9a1e;
}
.combo {
  display: flex;
  align-items: center;
  justify-content: space-between;
  height: 22px;
  padding: 0 4px;
  font-size: 12px;
  color: #111;
  background: #fff;
  border: 1px solid #bcbcbc;
  border-radius: 3px;
}
.zoom-combo { width: 112px; margin: 0 1px; }

/* document tab bar */
.docbar {
  display: flex;
  flex: none;
  align-items: flex-start;
  height: 35px;
  padding-top: 1px;
  background: repeating-conic-gradient(#7c7c7c 0 25%, #858585 0 50%) 0 0 / 4px 4px;
  border-top: 1px solid #3c3c3c;
  border-bottom: 2px solid #fff;
}
.doctab {
  position: relative;
  display: flex;
  align-items: center;
  width: 215px;
  height: 31px;
  padding-left: 5px;
  font-size: 11.2px;
  background: #fbfbfb;
  border-radius: 0 3px 0 0;
}
.doctab::after {
  content: "";
  position: absolute;
  left: 5px;
  right: 5px;
  bottom: 1px;
  height: 2px;
  background: #a0a0a0;
}
.x8 {
  position: absolute;
  top: 6px;
  right: 4px;
  width: 8px;
  height: 8px;
}
.newtab {
  display: flex;
  align-items: center;
  justify-content: center;
  width: 27px;
  height: 27px;
  margin: 2px 0 0 3px;
  background: #c8c8c8;
  border-radius: 2px;
}
.closeall {
  display: flex;
  align-items: center;
  justify-content: center;
  width: 30px;
  height: 30px;
  margin-left: auto;
  margin-right: 1px;
  background: #c8c8c8;
  border-radius: 2px;
}

/* main area */
.main {
  display: flex;
  flex: none;
  height: 788px;
}
.sidebar {
  flex: none;
  width: 31px;
  background: #f3f3f3;
}
.side-top {
  display: flex;
  align-items: center;
  justify-content: flex-end;
  height: 11px;
  padding-right: 1px;
  background: #e6e6e6;
}
.side-grip {
  width: 26px;
  height: 9px;
  margin: 2px 0 0 3px;
}
.side-icons {
  display: flex;
  flex-direction: column;
  align-items: center;
  margin-top: 1px;
}
.side-icons > svg.i24, .side-note { margin: 2px 0; }
.side-icons > svg.i-page { margin: 3px 0; }
.side-note { position: relative; }
.side-note .green-dot { right: -2px; bottom: 2px; }
.side-sep {
  display: block;
  width: 28px;
  height: 1px;
  margin: 1px 0 2px;
  background: #bbb;
}
.canvas {
  position: relative;
  flex: 1;
  overflow: hidden;
  background: #fff;
  border-left: 1px solid #6f6f6f;
  border-bottom: 1px solid #6f6f6f;
  border-right: 1px solid #6f6f6f;
}
.vscroll {
  display: flex;
  flex-direction: column;
  align-items: center;
  justify-content: space-between;
  flex: none;
  position: relative;
  width: 15px;
  padding: 6px 0;
  background: #f3f3f3;
}
.vthumb {
  position: absolute;
  right: 0;
  top: 303px;
  width: 4px;
  height: 18px;
  background: #3f9be6;
}
.vscroll .dd { width: 9px; }
.hscroll {
  position: relative;
  display: flex;
  align-items: center;
  justify-content: space-between;
  flex: none;
  height: 15px;
  padding: 0 20px 0 35px;
  background: #f0f0f0;
}
.sc-arrow { width: 6px; height: 10px; }
.hthumb {
  position: absolute;
  left: 939px;
  top: 5px;
  width: 154px;
  height: 5px;
  border-radius: 3px;
  background: #7e7e7e;
}

/* pdf page content, placed on a free canvas */
.ink {
  position: absolute;
  background: #000;
}
.box-right { left: 81px; top: 0; width: 14px; height: 593px; }
.box-bottom { left: -1px; top: 589px; width: 89px; height: 12px; }
.bar-a { left: 99px; top: 0; width: 28px; height: 100%; }
.bar-b { left: 203px; top: 0; width: 29px; height: 100%; }
.frame-left { left: 829px; top: 0; width: 13px; height: 769px; }
.frame-right { left: 1221px; top: 0; width: 14px; height: 769px; }
.frame-bottom { left: 835px; top: 763px; width: 393px; height: 15px; }
.dash-a { left: 1235px; top: 223px; width: 46px; height: 14px; }
.dash-b { left: 1375px; top: 223px; width: 93px; height: 14px; }
.dash-c { left: 1561px; top: 223px; width: 91px; height: 14px; border-radius: 0 0 5px 0; }
.stem-top { left: 1637px; top: 30px; width: 15px; height: 96px; }
.stem-stub { left: 1637px; top: 219px; width: 15px; height: 4px; }
.mark-line { left: 972px; top: 58px; width: 7px; height: 700px; }
.pdf-text {
  position: absolute;
  font: 128px/128px "Liberation Sans", Arial, sans-serif;
  color: #000;
  white-space: nowrap;
  transform-origin: 0 0;
  transform: rotate(-90deg) scaleY(1.04);
}
.one {
  font-family: Roboto, sans-serif;
  font-size: 123px;
  letter-spacing: 2px;
}
.txt-sgm { left: -72px; top: 549px; }
.txt-tps { left: 225px; top: 676px; }
.txt-lcs { left: 845px; top: 757px; }
.hit {
  position: absolute;
  left: 892px;
  top: 30px;
  width: 88px;
  height: 728px;
  background: #81ebff;
  border: 1px solid #1aa5de;
  border-radius: 2px;
  mix-blend-mode: multiply;
}

/* find bar over the page */
.findbar {
  position: absolute;
  left: 1562px;
  top: 2px;
  display: flex;
  align-items: center;
  width: 310px;
  height: 33px;
  padding-left: 9px;
  background: #f3f3f3;
  border: 1px solid #d4d4d4;
  border-radius: 4px;
  box-shadow: 0 1px 2px rgba(0,0,0,.25);
}
.find-input {
  display: flex;
  align-items: center;
  width: 192px;
  height: 24px;
  margin: 0 8px 0 5px;
  padding: 0 4px;
  background: #fff;
  border: 1px solid #bbb;
  border-radius: 3px;
  font-size: 11.3px;
}
.find-q { flex: 1; }
.find-n { color: #7a5a6a; margin-right: 3px; }
.x12 { width: 12px; height: 12px; margin-right: 7px; }
.nav7 { width: 7px; height: 12px; margin-right: 15px; }
.x9 { width: 9px; height: 9px; margin-left: 3px; }

/* status bar */
.status {
  display: flex;
  flex: none;
  align-items: center;
  height: 32px;
  padding-left: 33px;
  background: #f3f3f3;
  font-size: 12px;
}
.status .vsep { height: 28px; }
.st-left, .st-center, .st-right {
  display: flex;
  align-items: center;
  flex: none;
  height: 32px;
}
.st-left { width: 798px; }
.st-center { width: 642px; }
.st-right { width: 447px; position: relative; }
.grip-box {
  display: flex;
  flex-direction: column;
  align-items: center;
  gap: 1px;
  width: 9px;
}
.grip { width: 9px; height: 15px; }
.st-opts { margin-left: 3px; }
.st-text { margin-left: 3px; letter-spacing: -.4px; white-space: nowrap; }
.st-left .dd { margin-left: 4px; }
.st-left .vsep { margin: 0 4px 0 2px; }
.st-size, .st-xy {
  display: flex;
  flex-direction: column;
  line-height: 13px;
  white-space: nowrap;
}
.st-size { width: 69px; margin: 0 1px 0 1px; font-size: 11.2px; }
.st-xy { margin-left: 2px; }
.nav-first { margin-left: 4px; }
.st-center .i22 + .i22 { margin-left: 6px; }
.page-box {
  display: flex;
  align-items: flex-start;
  justify-content: flex-end;
  width: 94px;
  height: 22px;
  margin: 0 5px;
  padding: 3px 4px 0 0;
  color: #666;
  background: #f8f8f8;
  border: 1px solid #c2c2c2;
  border-radius: 3px;
}
.page-box em { font-style: normal; font-size: 15px; margin: 0 2px; }
.page-box sup { font-size: 11px; line-height: 11px; }
.st-center .vsep { margin: 0 4px; }
.st-single { width: 18px; height: 22px; margin-left: 6px; }
.st-on {
  display: flex;
  align-items: center;
  justify-content: center;
  width: 28px;
  height: 28px;
  margin: 0 2px 0 4px;
  background: #e5d3a1;
  border: 1px solid #cdbf95;
  border-radius: 2px;
}
.st-two { width: 24px; height: 20px; }
.st-four { width: 24px; height: 22px; margin: 0 4px 0 5px; }
.st-combo { width: 82px; margin: 0 2px 0 0; padding: 0 4px; }
.st-right .vsep { margin: 0 4px 0 0; }
.st-right .grip-box + .st-combo { margin-left: 3px; }
.st-four + .grip-box { margin-right: -1px; }
.slider {
  position: relative;
  width: 100px;
  height: 3px;
  margin: 0 5px;
  background: linear-gradient(to right, #8e8e8e 71%, #cfcfcf 71%);
}
.knob {
  position: absolute;
  left: 61px;
  top: -9px;
  width: 20px;
  height: 20px;
  background: radial-gradient(circle, #777 0 4px, #f7f7f7 4.500px);
  border: 1px solid #777;
  border-radius: 50%;
}
.grip-pdf { margin: 0 3px 0 7px; }
.st-right > .dd { margin-left: 5px; }
.st-end {
  position: absolute;
  right: 0;
  top: 0;
  width: 14px;
  padding-top: 3px;
}
.st-end .dd { width: 9px; margin-bottom: 3px; border-bottom: 1px solid #333; height: 7px; }
```
